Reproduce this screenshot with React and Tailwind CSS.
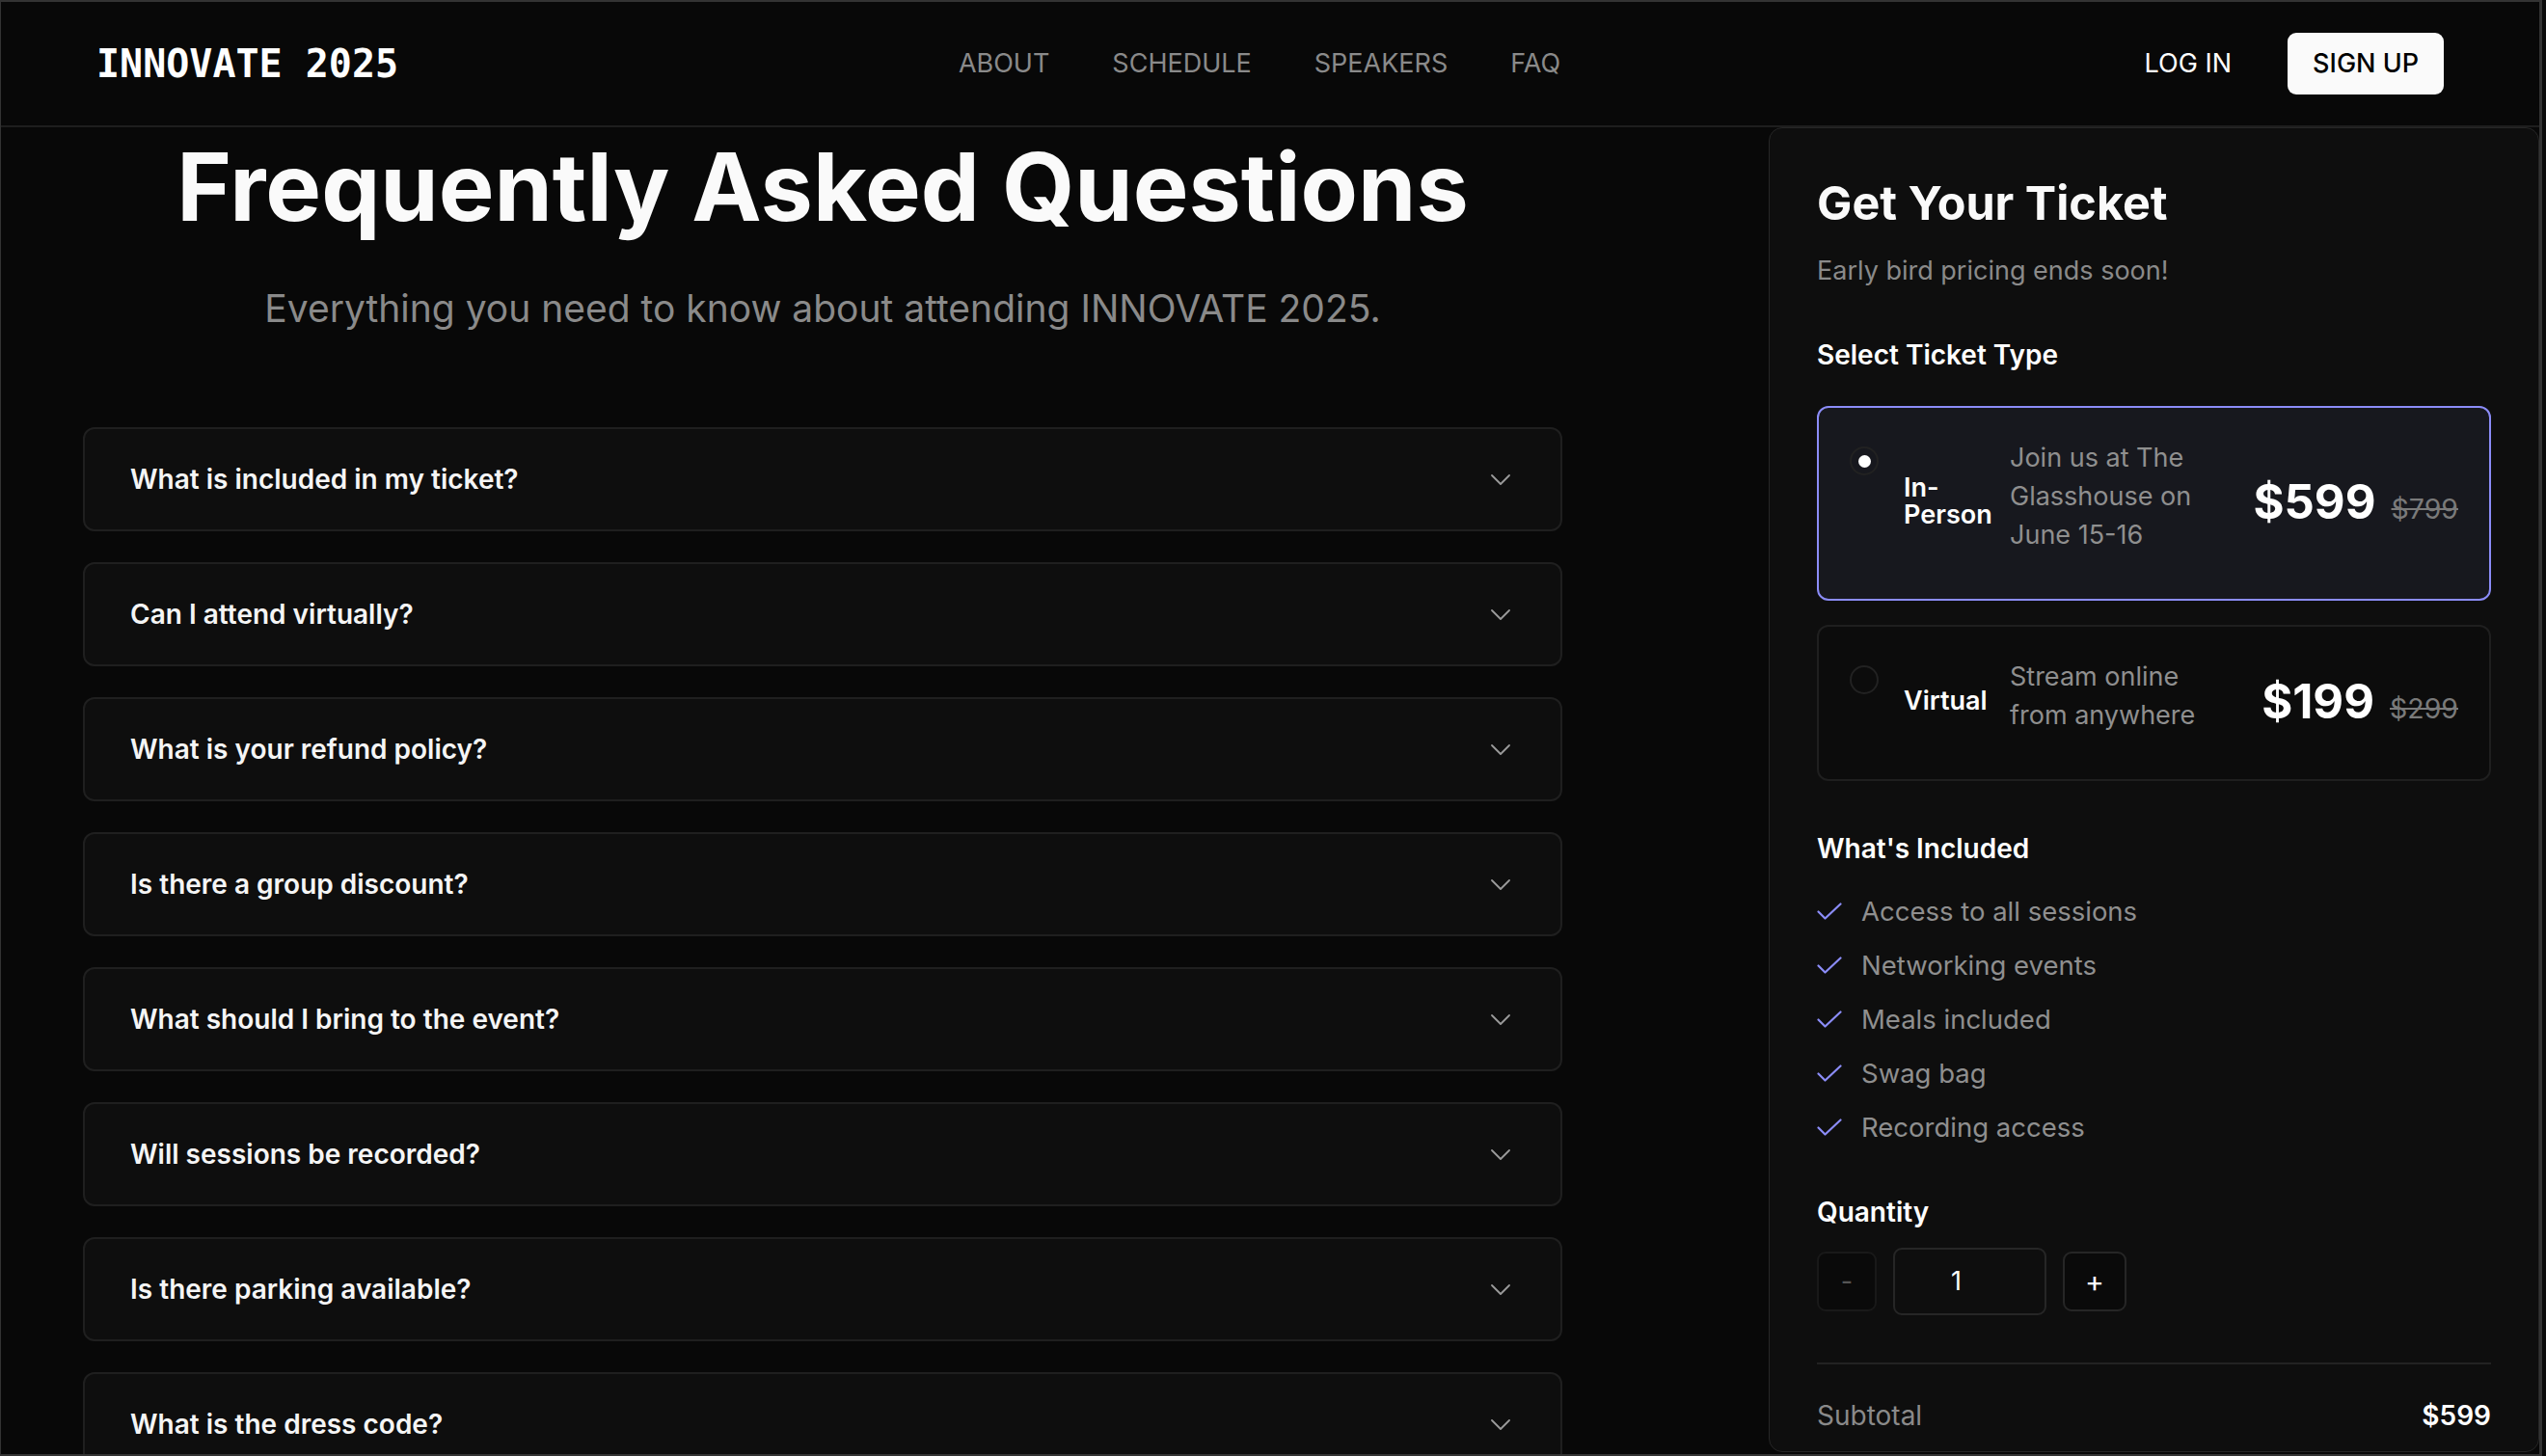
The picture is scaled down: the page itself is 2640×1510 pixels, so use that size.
import React from "react";

const faqs = [
  "What is included in my ticket?",
  "Can I attend virtually?",
  "What is your refund policy?",
  "Is there a group discount?",
  "What should I bring to the event?",
  "Will sessions be recorded?",
  "Is there parking available?",
  "What is the dress code?",
];

const included = [
  "Access to all sessions",
  "Networking events",
  "Meals included",
  "Swag bag",
  "Recording access",
];

function Chevron() {
  return (
    <svg width="20" height="11" viewBox="0 0 20 11" fill="none" className="shrink-0">
      <polyline points="1,1 10,10 19,1" stroke="#9a9a9a" strokeWidth="1.8" strokeLinecap="round" strokeLinejoin="round" />
    </svg>
  );
}

function Check() {
  return (
    <svg width="26" height="18" viewBox="0 0 26 18" fill="none" className="shrink-0">
      <polyline points="1.5,9.5 8.5,16.5 24.5,1.5" stroke="#8b8cf7" strokeWidth="2.2" strokeLinecap="round" strokeLinejoin="round" />
    </svg>
  );
}

function TicketOption({ selected, label, desc, price, old }) {
  return (
    <div
      className={
        "flex items-center rounded-[12px] border-2 pl-[32px] pr-[32px] pt-[32px] pb-[46px] " +
        (selected ? "border-[#8b8cf7] bg-[#17181e]" : "border-[#1f1f1f] bg-[#0c0c0c]")
      }
    >
      <div className="self-start mt-2 w-[30px] h-[30px] rounded-full border-2 border-[#222] flex items-center justify-center shrink-0">
        {selected && <div className="w-[13px] h-[13px] rounded-full bg-white" />}
      </div>
      <div className="ml-[26px] w-[94px] shrink-0 text-[27px] leading-[28px] font-semibold text-white mt-[10px]">{label}</div>
      <div className="ml-[16px] w-[200px] shrink-0 text-[27px] leading-[40px] text-[#8f8f8f]">{desc}</div>
      <div className="ml-auto flex items-baseline gap-[16px] mt-[10px]">
        <span className="text-[49px] leading-none font-bold text-white">{price}</span>
        <span className="text-[28.5px] leading-none text-[#7a7a7a] line-through">{old}</span>
      </div>
    </div>
  );
}

export default function App() {
  return (
    <div className="w-[2640px] h-[1510px] bg-[#0a0a0a]" style={{ fontFamily: "Inter, 'Noto Sans', sans-serif" }}>
      <div className="w-[2636px] h-[1510px] border-t-2 border-l border-r-[3px] border-b-2 border-[#333] bg-[#080808] overflow-hidden flex flex-col">
        {/* Header */}
        <header className="h-[130px] shrink-0 border-b-2 border-[#1e1e1e] grid grid-cols-[1fr_auto_1fr] items-center pl-[99px] pr-[99px]">
          <div
            className="text-[40px] font-bold text-white"
            style={{ fontFamily: "'DejaVu Sans Mono', 'Liberation Mono', monospace" }}
          >
            INNOVATE 2025
          </div>
          <nav className="flex items-center gap-[65px] text-[27px] text-[#8a8a8a] mr-[22px]">
            <span>ABOUT</span>
            <span>SCHEDULE</span>
            <span>SPEAKERS</span>
            <span>FAQ</span>
          </nav>
          <div className="flex items-center justify-end gap-[58px]">
            <span className="text-[27px] text-white">LOG IN</span>
            <button className="h-[64px] px-[26px] rounded-[9px] bg-[#fafafa] text-black text-[27px] font-medium">SIGN UP</button>
          </div>
        </header>

        {/* Body */}
        <div className="flex flex-1 min-h-0">
          {/* Left column */}
          <main className="w-[1833px] shrink-0 pl-[85px] pt-[13px] overflow-hidden">
            <div className="w-[1534px]">
              <h1 className="text-center text-[97px] leading-none font-bold text-[#fafafa]">
                Frequently Asked Questions
              </h1>
              <p className="mt-[49px] text-center text-[39px] leading-[57px] text-[#8a8a8a]">
                Everything you need to know about attending INNOVATE 2025.
              </p>
              <div className="mt-[95px] flex flex-col gap-[32px]">
                {faqs.map((q) => (
                  <div
                    key={q}
                    className="h-[108px] shrink-0 rounded-[12px] border-2 border-[#1f1f1f] bg-[#0e0e0e] flex items-center justify-between pl-[47px] pr-[52px]"
                  >
                    <span className="text-[28px] font-semibold text-[#f5f5f5]">{q}</span>
                    <Chevron />
                  </div>
                ))}
              </div>
            </div>
          </main>

          {/* Right panel */}
          <aside className="w-[799px] h-[1374px] shrink-0 rounded-[14px] border border-[#262626] bg-[#0e0e0e] overflow-hidden pl-[49px] pr-[49px] pt-[48px]">
            <h2 className="text-[48.5px] leading-[60px] font-bold text-[#fafafa]">Get Your Ticket</h2>
            <p className="mt-[19px] text-[27px] leading-[42px] text-[#8a8a8a]">Early bird pricing ends soon!</p>
            <h3 className="mt-[46px] text-[28px] leading-[40px] font-semibold text-white">Select Ticket Type</h3>
            <div className="mt-[33px] flex flex-col gap-[25px]">
              <TicketOption selected label="In-Person" desc="Join us at The Glasshouse on June 15-16" price="$599" old="$799" />
              <TicketOption label="Virtual" desc="Stream online from anywhere" price="$199" old="$299" />
            </div>
            <h3 className="mt-[50px] text-[28px] leading-[40px] font-semibold text-white">What's Included</h3>
            <ul className="mt-[25px] flex flex-col gap-[16px]">
              {included.map((t) => (
                <li key={t} className="flex items-center gap-[20px] text-[27.5px] leading-[40px] text-[#8f8f8f]">
                  <Check />
                  <span>{t}</span>
                </li>
              ))}
            </ul>
            <h3 className="mt-[48px] text-[28px] leading-[40px] font-semibold text-white">Quantity</h3>
            <div className="mt-[17px] flex items-center gap-[17px]">
              <button className="w-[62px] h-[62px] rounded-[9px] border-2 border-[#191919] bg-[#0a0a0a] text-[27px] text-[#555]">-</button>
              <div className="w-[159px] h-[70px] rounded-[9px] border-2 border-[#262626] flex items-center justify-center pr-[28px] text-[27px] text-white">1</div>
              <button className="w-[66px] h-[62px] rounded-[9px] border-2 border-[#262626] bg-[#0a0a0a] text-[30px] text-white">+</button>
            </div>
            <div className="mt-[49px] border-t-2 border-[#222]" />
            <div className="pt-[33px] flex items-center justify-between text-[28px] leading-[40px]">
              <span className="text-[#8a8a8a]">Subtotal</span>
              <span className="font-semibold text-white">$599</span>
            </div>
          </aside>
        </div>
      </div>
    </div>
  );
}
